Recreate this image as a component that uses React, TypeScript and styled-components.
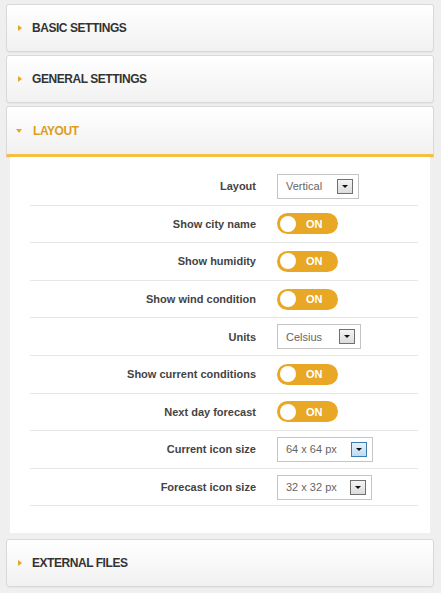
import React from "react";
import styled, { createGlobalStyle } from "styled-components";

const GlobalStyle = createGlobalStyle`
  html, body {
    margin: 0;
    padding: 0;
    background: #efefef;
    font-family: "Liberation Sans", Arial, sans-serif;
  }
`;

const Page = styled.div`
  display: flex;
  flex-direction: column;
  gap: 3px;
  padding: 4px 7px 6px 6px;
  width: 441px;
  box-sizing: border-box;
`;

const Section = styled.div`
  display: flex;
  flex-direction: column;
`;

const Header = styled.div<{ $open?: boolean }>`
  display: flex;
  align-items: center;
  height: 48px;
  box-sizing: border-box;
  padding-left: 10px;
  border: 1px solid #d9d9d9;
  border-radius: 3px;
  background: linear-gradient(#ffffff, #f1f1f1);
  box-shadow: 0 1px 1px rgba(0, 0, 0, 0.04);
  border-bottom: ${(p) => (p.$open ? "3px solid #f5bf42" : "1px solid #d9d9d9")};
  ${(p) => p.$open && "border-bottom-left-radius: 0; border-bottom-right-radius: 0; height: 51px;"}
`;

const Caret = styled.span<{ $open?: boolean }>`
  width: 0;
  height: 0;
  ${(p) =>
    p.$open
      ? `
    border-left: 3.5px solid transparent;
    border-right: 3.5px solid transparent;
    border-top: 4px solid #e8a425;
    margin-left: -1px;
    margin-right: 11px;
    `
      : `
    border-top: 3.5px solid transparent;
    border-bottom: 3.5px solid transparent;
    border-left: 4px solid #e8a425;
    margin-left: 1px;
    margin-right: 10px;
    `}
`;

const Title = styled.span<{ $open?: boolean }>`
  font-size: 12px;
  font-weight: bold;
  text-transform: uppercase;
  color: ${(p) => (p.$open ? "#dd9d1e" : "#333")};
  letter-spacing: -0.45px;
`;

const Body = styled.div`
  margin: 0 4px 3px;
  background: #fff;
  padding: 11px 12px 27px 20px;
`;

const Row = styled.div`
  display: grid;
  grid-template-columns: 226px auto;
  column-gap: 21px;
  align-items: center;
  height: 37.6px;
  box-sizing: border-box;
  border-bottom: 1px solid #e6e6e6;
`;

const Label = styled.label`
  text-align: right;
  font-size: 11px;
  font-weight: bold;
  color: #444;
`;

const Select = styled.div<{ $width: number }>`
  display: flex;
  align-items: center;
  justify-content: space-between;
  width: ${(p) => p.$width}px;
  height: 25px;
  box-sizing: border-box;
  padding: 0 5px 0 8px;
  border: 1px solid #c4c4c4;
  background: #fff;
  color: #666;
  font-family: "Liberation Sans", Arial, sans-serif;
  font-size: 11px;
`;

const Arrow = styled.span<{ $hover?: boolean }>`
  display: flex;
  align-items: center;
  justify-content: center;
  width: 16px;
  height: 15px;
  box-sizing: border-box;
  border: 1px solid ${(p) => (p.$hover ? "#3d7bad" : "#707070")};
  background: ${(p) =>
    p.$hover ? "linear-gradient(#e5f1fb, #bcdcf4)" : "linear-gradient(#f4f4f4, #dcdcdc)"};

  &::after {
    content: "";
    border-left: 3px solid transparent;
    border-right: 3px solid transparent;
    border-top: 3px solid #111;
  }
`;

const Toggle = styled.div`
  display: flex;
  align-items: center;
  width: 61px;
  height: 21px;
  box-sizing: border-box;
  padding: 0 3px;
  border-radius: 11px;
  background: #e8a725;
  gap: 10px;
`;

const Knob = styled.span`
  width: 16px;
  height: 16px;
  border-radius: 50%;
  background: #fff;
`;

const ToggleText = styled.span`
  color: #fff;
  font-size: 11px;
  font-weight: bold;
`;

type Field =
  | { label: string; kind: "toggle" }
  | { label: string; kind: "select"; value: string; width: number; hover?: boolean };

const fields: Field[] = [
  { label: "Layout", kind: "select", value: "Vertical", width: 82 },
  { label: "Show city name", kind: "toggle" },
  { label: "Show humidity", kind: "toggle" },
  { label: "Show wind condition", kind: "toggle" },
  { label: "Units", kind: "select", value: "Celsius", width: 84 },
  { label: "Show current conditions", kind: "toggle" },
  { label: "Next day forecast", kind: "toggle" },
  { label: "Current icon size", kind: "select", value: "64 x 64 px", width: 96, hover: true },
  { label: "Forecast icon size", kind: "select", value: "32 x 32 px", width: 95 },
];

const Panel: React.FC<{ title: string; open?: boolean; children?: React.ReactNode }> = ({
  title,
  open,
  children,
}) => (
  <Section>
    <Header $open={open}>
      <Caret $open={open} />
      <Title $open={open}>{title}</Title>
    </Header>
    {open && children}
  </Section>
);

export default function App() {
  return (
    <>
      <GlobalStyle />
      <Page>
        <Panel title="Basic settings" />
        <Panel title="General settings" />
        <Panel title="Layout" open>
          <Body>
            {fields.map((f) => (
              <Row key={f.label}>
                <Label>{f.label}</Label>
                {f.kind === "toggle" ? (
                  <Toggle>
                    <Knob />
                    <ToggleText>ON</ToggleText>
                  </Toggle>
                ) : (
                  <Select $width={f.width}>
                    <span>{f.value}</span>
                    <Arrow $hover={f.hover} />
                  </Select>
                )}
              </Row>
            ))}
          </Body>
        </Panel>
        <Panel title="External files" />
      </Page>
    </>
  );
}
